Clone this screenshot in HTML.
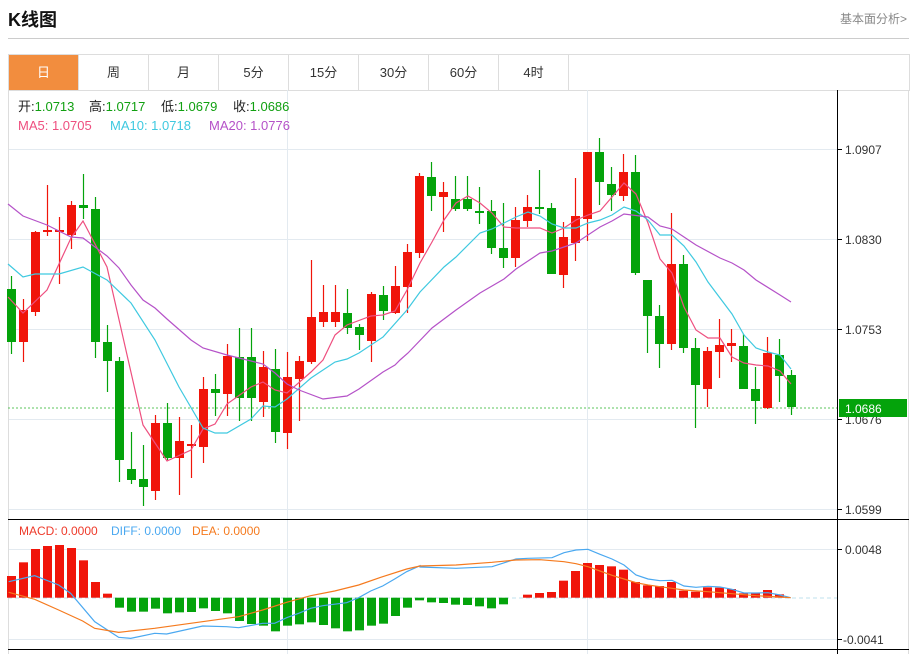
<!DOCTYPE html>
<html><head><meta charset="utf-8"><style>
body{margin:0;width:911px;height:654px;overflow:hidden;background:#fff;font-family:"Liberation Sans","Noto Sans CJK SC",sans-serif;position:relative}
.t{position:absolute;left:8px;top:6px;font-size:18px;font-weight:bold;color:#111}
.r{position:absolute;right:4px;top:10px;font-size:12px;color:#888}
.hl{position:absolute;left:8px;right:2px;top:38px;border-top:1px solid #ccc}
.tabs{position:absolute;left:8px;top:54px;width:900px;height:35px;border:1px solid #ddd;border-bottom:1px solid #ddd;display:flex}
.tabs div{width:69px;border-right:1px solid #ddd;text-align:center;line-height:35px;font-size:13px;color:#333}
.tabs div.a{background:#f28d3e;color:#fff}
svg{position:absolute;left:0;top:0}
</style></head><body>
<div class="t">K线图</div><div class="r">基本面分析&gt;</div><div class="hl"></div>
<div class="tabs"><div class="a">日</div><div>周</div><div>月</div><div>5分</div><div>15分</div><div>30分</div><div>60分</div><div>4时</div></div>
<svg id="s" width="911" height="654" xmlns="http://www.w3.org/2000/svg" font-family="Liberation Sans, Noto Sans CJK SC, sans-serif">
<g id="grid" stroke="#e3eaf0" stroke-width="1">
<line x1="8" x2="837" y1="149.5" y2="149.5"/><line x1="8" x2="837" y1="239.5" y2="239.5"/><line x1="8" x2="837" y1="329.5" y2="329.5"/><line x1="8" x2="837" y1="419.5" y2="419.5"/><line x1="8" x2="837" y1="509.5" y2="509.5"/>
<line x1="8" x2="837" y1="549.5" y2="549.5"/><line x1="8" x2="837" y1="639.5" y2="639.5"/>
<line x1="287.5" x2="287.5" y1="90" y2="654"/><line x1="587.5" x2="587.5" y1="90" y2="654"/>
</g>
<line x1="8.5" x2="8.5" y1="90" y2="654" stroke="#ddd"/>
<line x1="908.5" x2="908.5" y1="90" y2="654" stroke="#ddd"/>
<line x1="8" x2="837" y1="408" y2="408" stroke="#5bc45b" stroke-dasharray="2,2"/>
<line x1="8" x2="837" y1="598" y2="598" stroke="#bfe0ee" stroke-dasharray="4,3"/>
<g id="c"></g>
<line x1="837.5" x2="837.5" y1="90" y2="654" stroke="#000"/>
<line x1="8" x2="909" y1="519.5" y2="519.5" stroke="#000"/>
<line x1="8" x2="909" y1="649.5" y2="649.5" stroke="#000"/>
<g stroke="#000"><line x1="837" x2="842" y1="149.5" y2="149.5"/><line x1="837" x2="842" y1="239.5" y2="239.5"/><line x1="837" x2="842" y1="329.5" y2="329.5"/><line x1="837" x2="842" y1="419.5" y2="419.5"/><line x1="837" x2="842" y1="509.5" y2="509.5"/><line x1="837" x2="842" y1="549.5" y2="549.5"/><line x1="837" x2="842" y1="639.5" y2="639.5"/></g>
<g font-size="12" fill="#333">
<text x="845" y="154">1.0907</text><text x="845" y="244">1.0830</text><text x="845" y="334">1.0753</text><text x="845" y="424">1.0676</text><text x="845" y="514">1.0599</text>
<text x="845" y="554">0.0048</text><text x="843" y="644">-0.0041</text>
</g>
<rect x="839" y="399" width="68" height="18" fill="#04a30b"/>
<text x="845" y="413" font-size="12" fill="#fff">1.0686</text>
<g font-size="13">
<text x="18" y="111" fill="#222">开:<tspan fill="#11a011">1.0713</tspan></text>
<text x="89" y="111" fill="#222">高:<tspan fill="#11a011">1.0717</tspan></text>
<text x="161" y="111" fill="#222">低:<tspan fill="#11a011">1.0679</tspan></text>
<text x="233" y="111" fill="#222">收:<tspan fill="#11a011">1.0686</tspan></text>
<text x="18" y="130" fill="#ee4f7f">MA5: 1.0705</text><text x="110" y="130" fill="#3fc9e0">MA10: 1.0718</text><text x="209" y="130" fill="#b552c8">MA20: 1.0776</text>
</g>
<g font-size="12">
<text x="19" y="535" fill="#ee3a2a">MACD: 0.0000</text><text x="111" y="535" fill="#4aa8f0">DIFF: 0.0000</text><text x="192" y="535" fill="#f57a1e">DEA: 0.0000</text>
</g>
</svg>
<script>
var K=[[1,289,342,276,354],[0,310,342,299,362],[0,232,312,231,316],[0,230,232,185,236],[0,230,232,217,284],[0,205,235,201,249],[1,205,208,174,219],[1,209,342,197,358],[1,342,361,325,392],[1,361,460,357,482],[1,469,480,432,484],[1,479,487,445,506],[0,423,491,415,500],[1,423,458,403,460],[0,441,458,417,495],[0,444,446,425,478],[0,389,447,377,463],[1,389,393,374,416],[0,356,394,344,416],[1,357,398,328,421],[1,357,398,328,421],[0,367,402,351,417],[1,369,432,349,443],[0,377,433,352,449],[0,361,379,356,421],[0,317,362,260,364],[0,312,322,285,327],[0,312,322,285,327],[1,313,328,289,334],[1,327,335,324,350],[0,294,341,292,362],[1,295,311,286,320],[0,286,313,266,314],[0,252,287,244,313],[0,176,253,173,258],[1,177,196,162,211],[0,192,197,182,232],[1,199,209,176,211],[1,199,209,176,211],[1,211,213,187,224],[1,211,248,200,254],[1,248,258,203,268],[0,220,258,207,267],[0,207,221,195,227],[1,207,209,170,214],[1,208,274,203,274],[0,237,275,222,288],[0,216,243,178,261],[0,152,219,152,241],[1,152,182,138,205],[1,184,195,167,211],[0,172,196,154,201],[1,172,273,155,275],[1,280,316,280,353],[1,316,344,305,368],[0,264,344,213,350],[1,264,348,255,353],[1,348,385,338,428],[0,351,389,347,407],[0,345,352,319,378],[0,343,346,329,362],[1,346,389,334,389],[1,389,401,367,424],[0,353,408,337,409],[1,355,376,339,402],[1,375,407,370,415]];
var M=[183,142,102,93,90,99,136,201,236,278,290,290,281,295,292,291,280,288,295,318,327,332,349,332,328,322,330,340,349,346,332,326,303,278,256,262,264,269,270,274,280,268,248,239,234,231,197,168,144,150,154,164,201,211,213,201,227,230,217,218,222,235,233,225,238,248];
var RED="#f0150a",GRN="#04a30b",h="";
function X(i){return 11.5+12*i}
M.forEach(function(v,i){var y=515+v/3,z=597.7;if(Math.abs(y-z)<0.5)return;var t=Math.min(y,z),hh=Math.abs(y-z);h+='<rect x="'+(X(i)-4.5)+'" y="'+t+'" width="9" height="'+hh+'" fill="'+(y<z?RED:GRN)+'"/>';});
K.forEach(function(k,i){var c=k[0]?GRN:RED,x=X(i);h+='<line x1="'+x+'" x2="'+x+'" y1="'+k[3]+'" y2="'+k[4]+'" stroke="'+c+'" stroke-width="1.2"/>';var bh=Math.max(k[2]-k[1],2);h+='<rect x="'+(x-4.5)+'" y="'+k[1]+'" width="9" height="'+bh+'" fill="'+c+'"/>';});
function P(pts,col){return '<polyline fill="none" stroke="'+col+'" stroke-width="1.2" points="'+pts+'"/>'}
h+=P("8,297 23,313 47,290 71,238 83,221 107,267 143,425 167,461 191,450 203,429 215,424 227,404 251,387 263,382 275,390 287,393 311,372 323,360 335,335 347,325 371,316 383,315 395,311 407,290 420,263 432,242 444,220 456,203 468,196 480,203 492,213 504,227 516,228 540,228 552,233 564,228 576,220 588,215 600,211 612,197 624,183 636,194 648,223 660,259 672,273 684,307 696,330 708,338 720,338 732,357 744,363 756,365 768,366 780,371 791,384","#ee4f7f");
h+=P("8,264 23,277 35,274 59,274 83,267 107,280 131,303 155,340 179,387 203,428 215,433 227,433 251,419 263,406 275,407 287,399 311,378 335,362 347,359 359,353 383,337 407,310 420,292 444,267 456,257 480,233 492,229 516,217 528,212 540,216 552,224 564,228 576,228 588,223 600,220 612,215 624,207 636,211 648,220 660,235 672,235 684,246 696,262 708,282 720,298 732,314 744,335 756,348 768,352 780,355 791,369","#3fc9e0");
h+=P("8,204 23,216 47,225 71,237 83,238 107,256 119,268 131,285 143,300 155,308 167,319 191,340 203,348 227,355 251,361 263,364 275,373 287,384 299,390 323,399 347,396 359,389 383,372 395,365 400,360 408,353 432,328 456,310 480,293 504,279 516,269 540,253 552,251 576,243 600,227 612,221 624,214 648,217 660,226 672,229 684,237 696,245 720,258 732,263 744,270 756,280 780,295 791,302","#b552c8");
function Q(a,off){return a.map(function(p){return (p[0]/3+off)+","+(515+p[1]/3)}).join(" ")}
var d1=Q([[26,200],[104,182],[176,210],[212,235],[284,320],[356,367],[392,370],[464,355],[500,357],[608,333],[680,335],[716,338],[788,325],[824,325],[860,308],[896,295],[932,280],[968,272],[1040,263],[1076,248],[1112,228],[1148,213],[1184,192],[1220,170],[1260,152]],0)+" "+Q([[60,156],[168,160],[276,155],[348,132],[384,130],[456,128],[492,113],[528,105],[564,103],[600,118],[636,132],[672,150],[708,180],[744,192],[780,197],[816,196],[852,213],[888,217],[924,214],[960,216],[996,223],[1032,234],[1068,234],[1104,233],[1140,240],[1172,248]],400);
var d2=Q([[26,232],[104,253],[176,285],[248,318],[284,340],[356,352],[464,340],[572,325],[680,310],[716,305],[788,285],[860,262],[932,242],[1004,228],[1076,210],[1148,185],[1220,162],[1260,153]],0)+" "+Q([[60,153],[168,150],[276,142],[348,135],[420,134],[492,140],[528,146],[564,155],[600,168],[636,181],[672,192],[708,203],[744,210],[780,215],[816,220],[852,225],[924,230],[996,236],[1068,242],[1172,248]],400);
h+=P(d1,"#4aa8f0")+P(d2,"#f57a1e");
document.getElementById("c").innerHTML=h;
</script>
</body></html>
